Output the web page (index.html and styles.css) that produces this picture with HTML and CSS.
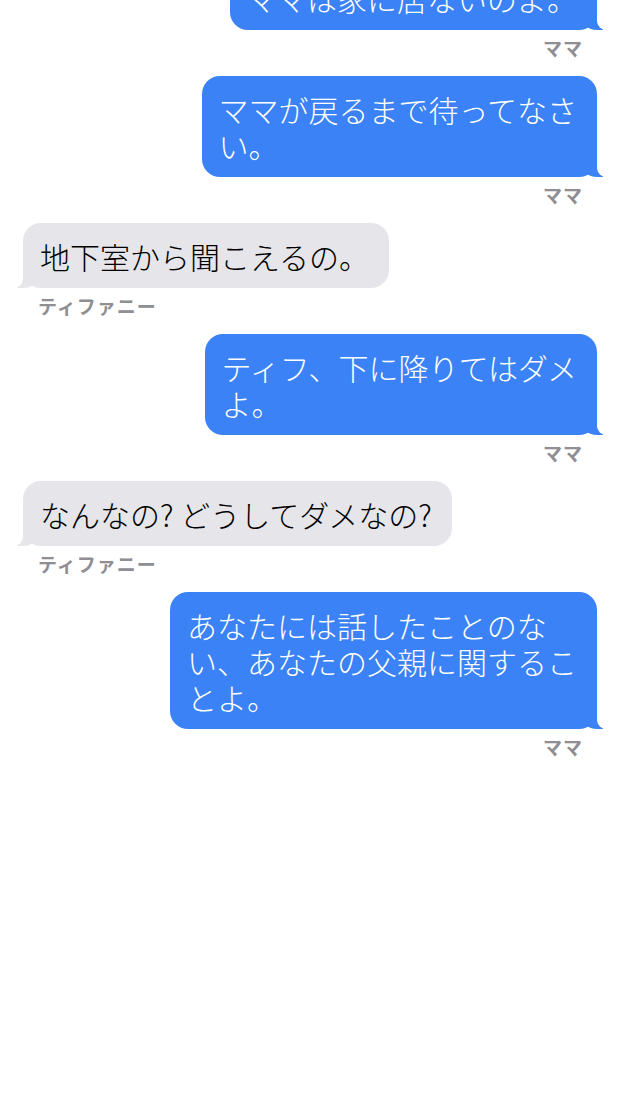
FILE: index.html
```html
<!DOCTYPE html>
<html lang="ja">
<head>
  <meta charset="UTF-8" />
  <meta name="viewport" content="width=device-width, initial-scale=1.0"/>
  <title>メッセージ</title>
  <link rel="stylesheet" href="styles.css">
</head>
<body>
  <div class="thread">
    <div class="msg me">
      <div class="bubble">ママは家に居ないのよ。</div>
      <div class="name">ママ</div>
    </div>

    <div class="msg me">
      <div class="bubble">ママが戻るまで待ってなさ<br>い。</div>
      <div class="name">ママ</div>
    </div>

    <div class="msg them">
      <div class="bubble">地下室から聞こえるの。</div>
      <div class="name">ティファニー</div>
    </div>

    <div class="msg me">
      <div class="bubble">ティフ、下に降りてはダメ<br>よ。</div>
      <div class="name">ママ</div>
    </div>

    <div class="msg them">
      <div class="bubble">なんなの? どうしてダメなの?</div>
      <div class="name">ティファニー</div>
    </div>

    <div class="msg me">
      <div class="bubble">あなたには話したことのな<br>い、あなたの父親に関するこ<br>とよ。</div>
      <div class="name">ママ</div>
    </div>
  </div>
</body>
</html>
```

FILE: styles.css
```css
body {
  margin: 0;
  background: #ffffff;
  font-family: "Noto Sans CJK JP", "Noto Sans", sans-serif;
}

/* 上のメッセージは途中で切れている（スクロール済み） */
.thread {
  display: flex;
  flex-direction: column;
  padding: 0 24px 0 23px;
  margin-top: -35px;
}

.msg {
  display: flex;
  flex-direction: column;
  margin-bottom: 17px;
}

.msg.me {
  align-items: flex-end;
}

.msg.them {
  align-items: flex-start;
}

.bubble {
  position: relative;
  box-sizing: border-box;
  max-width: 440px;
  padding: 15px 20px 14px 17px;
  border-radius: 18px;
  font-size: 30px;
  font-weight: 300;
  line-height: 36px;
}

.me .bubble {
  background: #3a82f6;
  color: #ffffff;
}

.them .bubble {
  background: #e5e5ea;
  color: #000000;
}

/* しっぽ */
.bubble::before,
.bubble::after {
  content: "";
  position: absolute;
  bottom: 0;
  height: 22px;
}

.me .bubble::before {
  right: -6px;
  width: 22px;
  background: #3a82f6;
  border-bottom-left-radius: 16px 14px;
}

.me .bubble::after {
  right: -9px;
  width: 9px;
  background: #ffffff;
  border-bottom-left-radius: 9px;
}

.them .bubble::before {
  left: -6px;
  width: 22px;
  background: #e5e5ea;
  border-bottom-right-radius: 16px 14px;
}

.them .bubble::after {
  left: -9px;
  width: 9px;
  background: #ffffff;
  border-bottom-right-radius: 9px;
}

.name {
  font-size: 19px;
  line-height: 22px;
  font-weight: 700;
  color: #8e8e93;
  margin-top: 7px;
  padding: 0 14px 0 15px;
  letter-spacing: 1px;
}
```
